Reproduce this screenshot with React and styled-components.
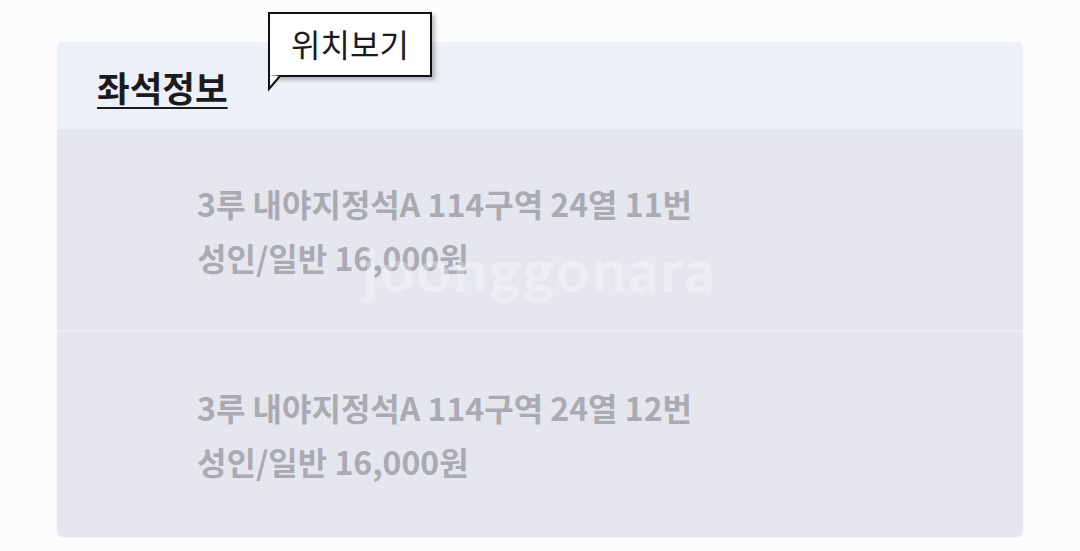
import styled, { createGlobalStyle } from "styled-components";

const GlobalStyle = createGlobalStyle`
  body {
    margin: 0;
    background: #fdfbfe;
    font-family: "Noto Sans CJK KR", "Noto Sans", sans-serif;
  }
`;

const seats = [
  { seat: "3루 내야지정석A 114구역 24열 11번", price: "성인/일반 16,000원" },
  { seat: "3루 내야지정석A 114구역 24열 12번", price: "성인/일반 16,000원" },
];

export default function App() {
  return (
    <>
      <GlobalStyle />
      <Page>
        <Card>
          <Header>
            <Title>좌석정보</Title>
          </Header>
          <SeatList>
            {seats.map((s, i) => (
              <SeatRow key={i} $first={i === 0}>
                <SeatLine>{s.seat}</SeatLine>
                <SeatLine>{s.price}</SeatLine>
              </SeatRow>
            ))}
          </SeatList>
          <Watermark>joonggonara</Watermark>
        </Card>
        <Bubble>
          위치보기
          <Tail viewBox="0 0 14 16" width="14" height="16">
            <path d="M1 0 L1 14 L12 1" fill="#fff" stroke="#111" strokeWidth="2" />
          </Tail>
        </Bubble>
      </Page>
    </>
  );
}

const Page = styled.div`
  position: relative;
  width: 1080px;
  height: 551px;
  display: flex;
  align-items: flex-start;
  padding: 42px 0 0 57px;
  box-sizing: border-box;
`;

const Card = styled.div`
  position: relative;
  width: 966px;
  border-radius: 6px;
  overflow: hidden;
  background: #e6e7ee;
  box-shadow: 0 1px 2px rgb(0 0 0 / 4%);
`;

const Header = styled.div`
  height: 87px;
  background: #eef0f7;
  display: flex;
  align-items: center;
  padding-left: 40px;
  box-sizing: border-box;
`;

const Title = styled.h2`
  margin: 0;
  margin-top: 2px;
  font-size: 35.5px;
  font-weight: 700;
  color: #1b1b1f;
  text-decoration: underline;
  text-decoration-thickness: 2px;
  text-underline-offset: 5px;
`;

const Bubble = styled.div`
  position: absolute;
  left: 268px;
  top: 12px;
  width: 164px;
  height: 65px;
  box-sizing: border-box;
  border: 2px solid #111;
  background: #fff;
  font-size: 32px;
  color: #1b1b1f;
  display: flex;
  align-items: center;
  justify-content: center;
  padding-bottom: 4px;
  box-shadow: 3px 3px 4px rgb(0 0 0 / 25%);
`;

const Tail = styled.svg`
  position: absolute;
  left: -2px;
  top: 61px;
  overflow: visible;
`;

const SeatList = styled.div`
  display: flex;
  flex-direction: column;
`;

const SeatRow = styled.div`
  display: flex;
  flex-direction: column;
  padding: ${(p) => (p.$first ? "47px 0 46px 140px" : "48px 0 49px 140px")};
  border-top: ${(p) => (p.$first ? "none" : "2px solid #f0eef4")};
`;

const SeatLine = styled.div`
  font-size: 32px;
  line-height: 54px;
  font-weight: 700;
  color: #a9aab2;
`;

const Watermark = styled.div`
  position: absolute;
  left: 0;
  right: 0;
  top: 191px;
  text-align: center;
  font-family: "Lato", sans-serif;
  font-weight: 700;
  font-size: 60px;
  letter-spacing: 2px;
  color: rgb(255 255 255 / 30%);
  pointer-events: none;
`;
